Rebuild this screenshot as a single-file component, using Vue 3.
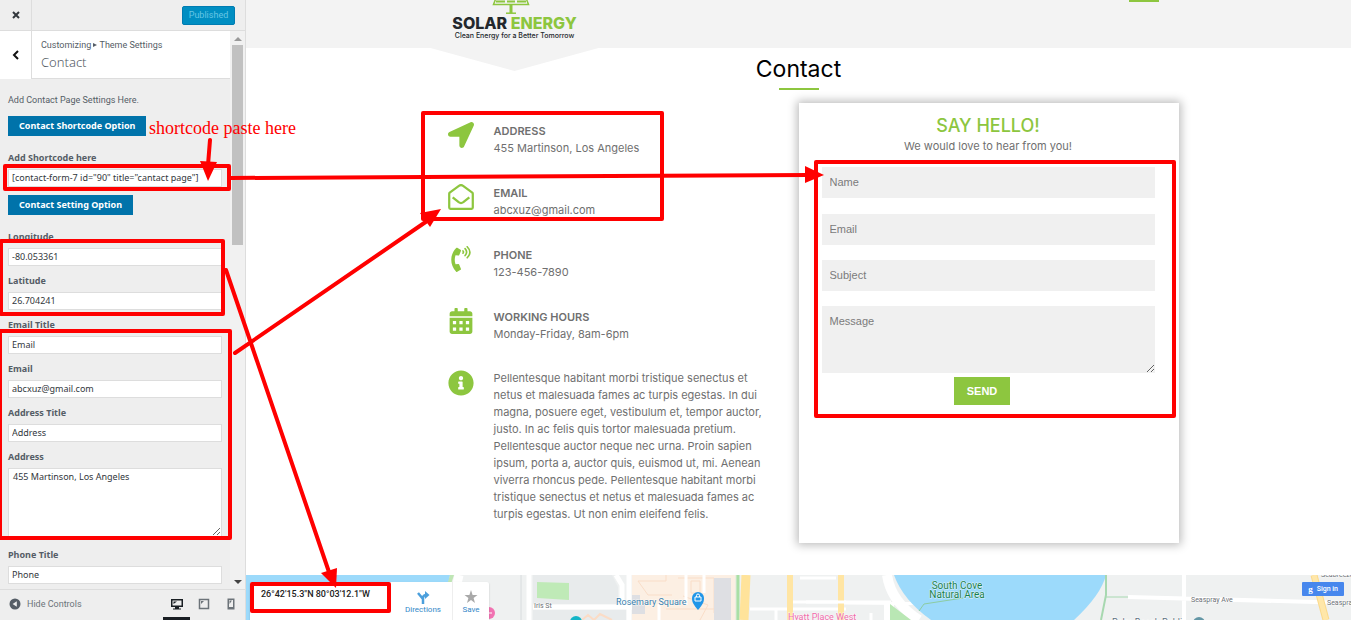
<script setup>
import { reactive } from 'vue'

const fields = reactive([
  { id: 'longitude', label: 'Longitude', value: '-80.053361' },
  { id: 'latitude', label: 'Latitude', value: '26.704241' },
  { id: 'email-title', label: 'Email Title', value: 'Email' },
  { id: 'email', label: 'Email', value: 'abcxuz@gmail.com' },
  { id: 'address-title', label: 'Address Title', value: 'Address' },
  { id: 'address', label: 'Address', value: '455 Martinson, Los Angeles', area: true },
  { id: 'phone-title', label: 'Phone Title', value: 'Phone' }
])
const shortcode = reactive({ value: '[contact-form-7 id="90" title="cantact page"]' })

const contacts = [
  { icon: 'arrow', title: 'ADDRESS', text: '455 Martinson, Los Angeles' },
  { icon: 'mail', title: 'EMAIL', text: 'abcxuz@gmail.com' },
  { icon: 'phone', title: 'PHONE', text: '123-456-7890' },
  { icon: 'calendar', title: 'WORKING HOURS', text: 'Monday-Friday, 8am-6pm' }
]
const about = [
  'Pellentesque habitant morbi tristique senectus et',
  'netus et malesuada fames ac turpis egestas. In dui',
  'magna, posuere eget, vestibulum et, tempor auctor,',
  'justo. In ac felis quis tortor malesuada pretium.',
  'Pellentesque auctor neque nec urna. Proin sapien',
  'ipsum, porta a, auctor quis, euismod ut, mi. Aenean',
  'viverra rhoncus pede. Pellentesque habitant morbi',
  'tristique senectus et netus et malesuada fames ac',
  'turpis egestas. Ut non enim eleifend felis.'
]
const inputs = ['Name', 'Email', 'Subject']
</script>

<template>
  <div class="app">
    <aside class="side">
      <header class="bar">
        <button class="close" type="button" aria-label="Close">
          <svg width="8" height="8" viewBox="0 0 8 8"><path d="M1 1L7 7M7 1L1 7" stroke="#32373c" stroke-width="2" /></svg>
        </button>
        <button class="published" type="button">Published</button>
      </header>
      <div class="scroll">
        <div class="panel">
          <div class="heading">
            <button class="back" type="button" aria-label="Back">
              <svg width="8" height="10" viewBox="0 0 8 10"><path d="M6 1L2 5L6 9" fill="none" stroke="#111" stroke-width="2" /></svg>
            </button>
            <div class="titles">
              <span class="crumb">Customizing <i class="tri"></i> Theme Settings</span>
              <h1>Contact</h1>
            </div>
          </div>
          <div class="settings">
            <p class="intro">Add Contact Page Settings Here.</p>
            <button class="option" type="button">Contact Shortcode Option</button>
            <div class="field first">
              <label for="shortcode">Add Shortcode here</label>
              <input id="shortcode" v-model="shortcode.value" type="text">
            </div>
            <button class="option second" type="button">Contact Setting Option</button>
            <div v-for="f in fields" :key="f.id" class="field">
              <label :for="f.id">{{ f.label }}</label>
              <textarea v-if="f.area" :id="f.id" v-model="f.value"></textarea>
              <input v-else :id="f.id" v-model="f.value" type="text">
            </div>
          </div>
        </div>
        <div class="track">
          <i class="up"></i>
          <i class="thumb"></i>
          <i class="down"></i>
        </div>
      </div>
      <footer class="foot">
        <button class="hide" type="button">
          <svg width="12" height="12" viewBox="0 0 12 12"><circle cx="6" cy="6" r="5.5" fill="#555d66" /><path d="M7.8 3.2V8.8L3.6 6Z" fill="#eee" /></svg>
          <span>Hide Controls</span>
        </button>
        <div class="devices">
          <button class="device on" type="button" aria-label="Desktop">
            <svg width="12" height="12" viewBox="0 0 12 12"><path fill-rule="evenodd" d="M0 1H12V9H8V10.500H10V11.500H2V10.500H4V9H0ZM1.500 2.500V7.500H10.500V2.500Z" fill="#191e23" /><path d="M2.500 3.500H6L2.500 6Z" fill="#191e23" /></svg>
          </button>
          <button class="device" type="button" aria-label="Tablet">
            <svg width="12" height="12" viewBox="0 0 12 12"><path d="M1.500 1.500H10.500V10.500H1.500Z" fill="none" stroke="#6c7379" stroke-width="1.500" /><path d="M3 3H6L3 6Z" fill="#6c7379" /></svg>
          </button>
          <button class="device" type="button" aria-label="Mobile">
            <svg width="12" height="12" viewBox="0 0 12 12"><path fill-rule="evenodd" d="M2.500 .5H9.500V11.500H2.500ZM4 2V9H8V2Z" fill="#6c7379" /><path d="M4.500 2.500H7L4.500 6Z" fill="#6c7379" /></svg>
          </button>
        </div>
      </footer>
    </aside>

    <main class="site">
      <header class="top">
        <div class="wrap">
          <a class="logo" href="#">
            <svg width="38" height="15" viewBox="0 0 38 15" fill="none" stroke="#8dc63f">
              <path d="M4 -2L1.500 4.500H36.500L34 -2" stroke-width="1.500" />
              <path d="M4 1.500H13M15 1.500H23M25 1.500H34" stroke-width="2" />
              <path d="M19 5V13" stroke-width="3" /><path d="M14 13.200H24" stroke-width="1.500" />
            </svg>
            <strong>SOLAR <b>ENERGY</b></strong>
            <small>Clean Energy for a Better Tomorrow</small>
          </a>
          <i class="active"></i>
        </div>
      </header>

      <div class="wrap page">
        <h2>Contact</h2>
        <div class="columns">
          <section class="info">
            <div v-for="c in contacts" :key="c.title" class="item">
              <span class="icon">
                <svg v-if="c.icon === 'arrow'" width="26" height="26" viewBox="0 0 512 512"><path d="M444.520 3.520L28.740 195.420c-47.970 22.390-31.980 92.750 19.190 92.750h175.910v175.910c0 51.170 70.360 67.170 92.750 19.190l191.900-415.780c15.990-38.390-25.590-79.970-63.970-63.970z" /></svg>
                <svg v-else-if="c.icon === 'mail'" width="26" height="26" viewBox="0 0 512 512"><path d="M24 190Q24 178 34 170L215 36Q256 8 297 36L478 170Q488 178 488 190V464Q488 488 464 488H48Q24 488 24 464Z M92 262L210 358Q256 392 302 358L420 262" fill="none" stroke="#8dc63f" stroke-width="44" stroke-linejoin="round" /></svg>
                <svg v-else-if="c.icon === 'phone'" width="20" height="26" viewBox="0 0 384 512"><path d="M97.333 506.966c-129.874-129.874-129.681-340.252 0-469.933 5.698-5.698 14.527-6.632 21.263-2.422l64.817 40.513a17.187 17.187 0 0 1 6.849 20.958l-32.408 81.021a17.188 17.188 0 0 1-17.669 10.719l-55.810-5.580c-21.051 58.261-20.612 122.471 0 179.515l55.811-5.581a17.188 17.188 0 0 1 17.669 10.719l32.408 81.022a17.188 17.188 0 0 1-6.849 20.958l-64.817 40.513a17.190 17.190 0 0 1-21.264-2.422z" /><path d="M231 98Q250 120 231 142M272 52Q334 120 272 188M314 14Q420 120 314 232" fill="none" stroke="#8dc63f" stroke-width="32" stroke-linecap="round" /></svg>
                <svg v-else width="24" height="26" viewBox="0 0 448 512"><path fill-rule="evenodd" d="M0 464c0 26.500 21.500 48 48 48h352c26.500 0 48-21.500 48-48V192H0zM64 256h64v64H64zM192 256h64v64h-64zM320 256h64v64h-64zM64 384h64v64H64zM192 384h64v64h-64zM320 384h64v64h-64zM400 64h-48V16c0-8.800-7.200-16-16-16h-32c-8.800 0-16 7.200-16 16v48H160V16c0-8.800-7.200-16-16-16h-32c-8.800 0-16 7.200-16 16v48H48C21.500 64 0 85.500 0 112v48h448v-48c0-26.500-21.500-48-48-48z" /></svg>
              </span>
              <div>
                <h3>{{ c.title }}</h3>
                <p>{{ c.text }}</p>
              </div>
            </div>
            <div class="item">
              <span class="icon">
                <svg width="26" height="26" viewBox="0 0 512 512"><path d="M256 8C119.043 8 8 119.083 8 256c0 136.997 111.043 248 248 248s248-111.003 248-248C504 119.083 392.957 8 256 8zm0 110c23.196 0 42 18.804 42 42s-18.804 42-42 42-42-18.804-42-42 18.804-42 42-42zm56 254c0 6.627-5.373 12-12 12h-88c-6.627 0-12-5.373-12-12v-24c0-6.627 5.373-12 12-12h12v-64h-12c-6.627 0-12-5.373-12-12v-24c0-6.627 5.373-12 12-12h64c6.627 0 12 5.373 12 12v100h12c6.627 0 12 5.373 12 12v24z" /></svg>
              </span>
              <p class="about"><template v-for="line in about" :key="line">{{ line }}<br></template></p>
            </div>
          </section>

          <form class="card" @submit.prevent>
            <h4>SAY HELLO!</h4>
            <p>We would love to hear from you!</p>
            <div class="inputs">
              <input v-for="n in inputs" :key="n" type="text" :placeholder="n" :aria-label="n">
              <textarea placeholder="Message" aria-label="Message"></textarea>
            </div>
            <button type="submit">SEND</button>
          </form>
        </div>
      </div>

      <section class="map">
        <svg class="tiles" aria-hidden="true">
          <rect width="100%" height="45" fill="#eff1f1" />
          <path d="M0 0H204L195 45H0Z" fill="#9cdafb" />
          <path d="M204 0H208L198 30L195 45H191Z" fill="#bfe6b5" />
          <path d="M213 0L203 45" stroke="#fff" stroke-width="9" />
          <path d="M275 0V45" stroke="#d8dcde" />
          <path d="M283 0V45M370 0L376 10V32M287 32H386M383 0V45" stroke="#fff" stroke-width="5" fill="none" />
          <path d="M287 0H366L372 12V29H287Z M287 35H380V45H287Z" fill="#e8ebec" />
          <path d="M291 7L323 8V25L291 23Z" fill="#bfeab7" />
          <path d="M386 0H491V45H386Z" fill="#fcefe3" />
          <path d="M392 6H420V0M392 6L402 20H426M432 3H468V38M445 6V18H454V6H445M420 34H480M437 21L462 30L454 45" fill="none" stroke="#f9ddc8" />
          <path d="M336 45L342 40L348 45L354 39L366 45" fill="none" stroke="#fbdcc6" stroke-width="2" />
          <path d="M440 0V30M413 29V45M458 0V18" stroke="#fff" stroke-width="3" />
          <path d="M386 20H394V30H399V39H386Z M468 3H485V45H468Z" fill="#dedfe3" />
          <path d="M491 0V45" stroke="#dcebdc" stroke-width="3" />
          <path d="M492 0V45" stroke="#a9dfa5" stroke-width="3" />
          <path d="M500 0L498 45" stroke="#ffe39a" stroke-width="9" />
          <path d="M504 34H600M560 27H600M530 34V45" stroke="#fff" stroke-width="3" />
          <path d="M544 0V45M595 0V45" stroke="#ffe5a3" stroke-width="6" />
          <path d="M547 27H645M554 3H590M625 38V45M598 28L720 29" stroke="#fff" stroke-width="3" />
          <path d="M643 27V45M641 0Q645 27 673 45" fill="none" stroke="#fff" stroke-width="10" />
          <path d="M644 29L665 45H644Z" fill="#b9e7b4" />
          <path d="M648 0Q657 25 685 45H828Q855 20 860 0Z" fill="#9cdafb" />
          <path d="M673 36L678 29L717 23" fill="none" stroke="#8dcca2" />
          <path d="M860 0V20L855 45" fill="none" stroke="#a7d8b0" stroke-width="2" />
          <path d="M860 22H884" stroke="#a7d8b0" />
          <path d="M882 22L1105 28M938 0V45" fill="none" stroke="#fff" stroke-width="4" />
          <path d="M1068 0L1080 45" stroke="#fbd98a" stroke-width="7" />
          <path d="M1068 0L1080 45" stroke="#ffe7a9" stroke-width="5" />
          <g class="labels">
            <text x="288" y="33" class="tiny">Iris St</text>
            <text x="370" y="30" class="square">Rosemary Square</text>
            <text x="711" y="14" fill="#19804f" text-anchor="middle">South Cove</text>
            <text x="711" y="23" fill="#19804f" text-anchor="middle">Natural Area</text>
            <text x="542" y="45" class="hotel">Hyatt Place West</text>
            <text x="945" y="27" class="tiny">Seaspray Ave</text>
            <text x="1081" y="30" class="tiny">Seaspray</text>
            <text x="1075" y="2" class="tiny">Seabreeze</text>
            <text x="866" y="50" class="library">Palm Beach Public</text>
          </g>
          <path d="M452 35C447 29 446 27 446 23A6 6 0 0 1 458 23C458 27 457 29 452 35Z" fill="#2196e8" />
          <path d="M449 22H455V26H449ZM450.500 22V20.500A1.500 1.500 0 0 1 453.500 20.500V22" fill="none" stroke="#fff" />
          <circle cx="330" cy="47" r="6" fill="#13b5c7" />
          <circle cx="953" cy="48" r="6" fill="#6497a6" />
          <circle cx="243" cy="38" r="6" fill="#f173b2" />
          <path d="M240 38H246" stroke="#fff" />
        </svg>
        <div class="place">
          <strong>26°42'15.3"N 80°03'12.1"W</strong>
          <a href="#">
            <svg width="14" height="16" viewBox="0 0 14 16"><path d="M7 15V10L2 4M7 11Q6.500 6 10 6" fill="none" stroke="#4b9fdc" stroke-width="2.500" /><path d="M9 2L13.500 6L9 10Z" fill="#4b9fdc" /></svg>
            Directions
          </a>
          <a class="save" href="#">
            <svg width="14" height="16" viewBox="0 0 14 16"><path d="M7 1L8.600 6H13.500L9.600 9L11 14L7 11L3 14L4.400 9L.5 6H5.400Z" fill="#a9a9a9" /></svg>
            Save
          </a>
        </div>
        <a class="signin" href="#"><span>g</span>Sign in</a>
      </section>
    </main>

    <svg class="notes" aria-hidden="true">
      <g fill="none" stroke="#f00" stroke-width="4" stroke-linejoin="round" stroke-linecap="round">
        <rect x="5" y="166" width="224" height="23" />
        <rect x="1" y="241" width="222" height="73" />
        <rect x="0" y="331" width="230" height="207" />
        <rect x="423" y="113" width="239" height="106" />
        <rect x="816" y="162" width="358" height="254" />
        <rect x="252" y="584" width="137" height="27" />
        <path d="M210 140L208 165M231 178L808 175M226 270L330 575M235 353L430 219" />
      </g>
      <g fill="#f00">
        <path d="M200 161L217 162L208 181Z" />
        <path d="M805 166L824 175L805 183Z" />
        <path d="M321 573L337 568L336 588Z" />
        <path d="M420 213L441 209L430 227Z" />
        <text x="149" y="134">shortcode paste here</text>
      </g>
    </svg>
  </div>
</template>

<style>
body { margin: 0; }
</style>

<style scoped>
* { box-sizing: border-box; }
h1, h2, h3, h4, p { margin: 0; }
button, input, textarea { font: inherit; border: 0; margin: 0; padding: 0; border-radius: 0; }
button { cursor: pointer; }
svg { display: block; }
.app { position: relative; display: flex; height: 100vh; overflow: hidden; font-family: Inter, sans-serif; background: #fff; }

.side { display: flex; flex-direction: column; flex: 0 0 246px; background: #eee; border-right: 1px solid #ddd; font: 9px/14px "Noto Sans", sans-serif; color: #555d66; }
.bar { display: flex; align-items: center; justify-content: space-between; height: 31px; border-bottom: 1px solid #ddd; padding-right: 10px; }
.close { display: grid; place-items: center; align-self: stretch; width: 32px; background: none; border-right: 1px solid #ddd; }
.published { min-width: 53px; height: 19px; background: #008ec2; border: 1px solid #007cb2; border-radius: 2px; color: #66c6e4; }
.published, .crumb, .intro, .hide { font-family: Roboto, sans-serif; }
.scroll { display: flex; flex: 1; min-height: 0; }
.panel { flex: 1; min-width: 0; overflow: hidden; }
.heading { display: flex; height: 48px; background: #fff; }
.back { display: grid; place-items: center; width: 32px; background: #fff; border-right: 1px solid #ddd; }
.titles { flex: 1; padding: 7px 9px 0; border-bottom: 1px solid #ddd; }
.crumb { display: block; }
.tri { display: inline-block; border: 2px solid transparent; border-left: 4px solid #555d66; border-right: 0; vertical-align: 1px; }
h1 { font-size: 13px; line-height: 20px; font-weight: 300; }
.settings { padding: 14px 8px 0; }
.intro { margin-bottom: 9px; }
.option { display: block; height: 20px; padding: 0 11px; background: #0073aa; color: #fff; font-weight: 700; }
.second { margin-bottom: 15px; }
.field { display: flex; flex-direction: column; gap: 4px; margin-bottom: 8px; }
.first { margin-top: 15px; }
.field label { font-weight: 700; }
.field input, .field textarea { width: 100%; height: 18px; padding: 0 3px 2px; border: 1px solid #ddd; background: #fff; color: #32373c; }
.field textarea { height: 69px; margin-bottom: 3px; padding: 1px 4px; }
.track { display: flex; flex-direction: column; align-items: center; width: 15px; padding: 6px 0 5px; background: #f1f1f1; }
.up, .down { border: 4px solid transparent; }
.up { border-top: 0; border-bottom-color: #999; margin-bottom: 4px; }
.down { border-bottom: 0; border-top-color: #444; margin-top: auto; }
.thumb { width: 11px; height: 200px; background: #c1c1c1; }
.foot { display: flex; justify-content: space-between; height: 31px; padding: 0 1px 0 9px; border-top: 1px solid #ddd; }
.hide { display: flex; align-items: center; gap: 6px; padding-bottom: 2px; background: none; color: #6c7379; }
.devices { display: flex; }
.device { display: grid; place-items: center; width: 27px; background: none; border-bottom: 3px solid transparent; }
.on { border-bottom-color: #191e23; }

.site { display: flex; flex-direction: column; flex: 1; min-width: 0; color: #6f6f6f; }
.wrap { width: 760px; max-width: 100%; margin: 0 auto; }
.top { height: 48px; background: #f3f3f3; }
.top .wrap { display: flex; justify-content: space-between; height: 48px; padding: 0 20px 0 12px; }
.logo { position: relative; z-index: 0; display: flex; flex-direction: column; align-items: center; width: 168px; height: 71px; text-decoration: none; color: #23282d; }
.logo::before { content: ""; position: absolute; z-index: -1; inset: 48px 0 0; background: #f3f3f3; clip-path: polygon(0 0, 100% 0, 50% 100%); }
.logo svg { margin-left: -8px; }
.logo strong { font-size: 16px; line-height: 17px; font-weight: 800; white-space: nowrap; }
.logo b { color: #8dc63f; font-weight: 800; }
.logo small { font-size: 7px; line-height: 8px; font-weight: 500; white-space: nowrap; }
.active { width: 30px; height: 2px; background: #8dc63f; }
.page { flex: 1; }
h2 { display: flex; flex-direction: column; align-items: center; padding-top: 6px; color: #000; font-size: 23px; line-height: 30px; font-weight: 400; }
h2::after { content: ""; width: 40px; height: 2px; margin-top: 4px; background: #8dc63f; }
.columns { display: grid; grid-template-columns: 1fr 380px; margin-top: 13px; }
.info { display: flex; flex-direction: column; gap: 27px; padding: 19px 0 0 28px; font-size: 11px; line-height: 17px; }
.item { display: grid; grid-template-columns: 28px 1fr; gap: 19px; }
.icon { display: flex; justify-content: center; height: 26px; }
.icon svg { fill: #8dc63f; }
h3 { font-size: 11px; line-height: 18px; font-weight: 600; }
.item p { white-space: nowrap; }
.card { display: flex; flex-direction: column; align-items: center; height: 440px; padding: 11px 24px 0 23px; background: #fff; box-shadow: 0 0 9px 2px #bbb; }
h4 { color: #8dc63f; font-size: 18px; line-height: 24px; font-weight: 500; }
.card p { font-size: 11px; line-height: 17px; }
.inputs { display: flex; flex-direction: column; gap: 15px; width: 100%; margin: 12px 0 4px; font: 11px/15px "Liberation Sans", Arial, sans-serif; }
.inputs input { height: 31px; padding: 0 8px 2px; background: #f0f0f0; }
.inputs input:first-child { margin-bottom: 1px; }
.inputs textarea { height: 67px; padding: 8px; background: #f0f0f0; }
.inputs ::placeholder { color: #7b7b7b; opacity: 1; }
.card button { height: 28px; padding: 0 13px; margin-right: 12px; background: #8dc63f; color: #fff; font: 700 11px/15px "Liberation Sans", Arial, sans-serif; }

.map { position: relative; height: 45px; overflow: hidden; font-family: Roboto, sans-serif; }
.tiles { width: 100%; height: 45px; }
.labels { font-size: 10px; }
.labels text { paint-order: stroke; stroke: #ffffffaa; stroke-width: 1px; }
.labels .tiny { font-size: 7px; fill: #6c7176; }
.labels .square { font-size: 9px; fill: #3b7fae; }
.labels .hotel { font-size: 9px; fill: #f06bab; }
.labels .library { font-size: 9px; fill: #5d7180; }
.place { position: absolute; top: 7px; left: 4px; display: flex; width: 239px; height: 50px; background: #fff; border-radius: 2px; box-shadow: 0 1px 2px #0003; font-size: 8px; line-height: 10px; }
.place strong { flex: 1; padding: 6px 0 0 11px; color: #222; font-size: 9px; line-height: 12px; font-weight: 500; white-space: nowrap; }
.place a { display: flex; flex-direction: column; align-items: center; width: 58px; padding-top: 7px; color: #3388c8; text-decoration: none; }
.place .save { width: 37px; border-left: 1px solid #eee; }
.signin { position: absolute; top: 7px; right: 7px; display: flex; align-items: center; gap: 4px; height: 14px; padding: 0 6px; border-radius: 1px; background: #4787ed; color: #fff; font-size: 7px; font-weight: 500; text-decoration: none; }
.signin span { font: 700 9px/12px "Liberation Serif", serif; }
.notes { position: absolute; inset: 0; width: 100%; height: 100%; pointer-events: none; }
.notes text { font: 18px "Liberation Serif", "Times New Roman", serif; }
</style>
